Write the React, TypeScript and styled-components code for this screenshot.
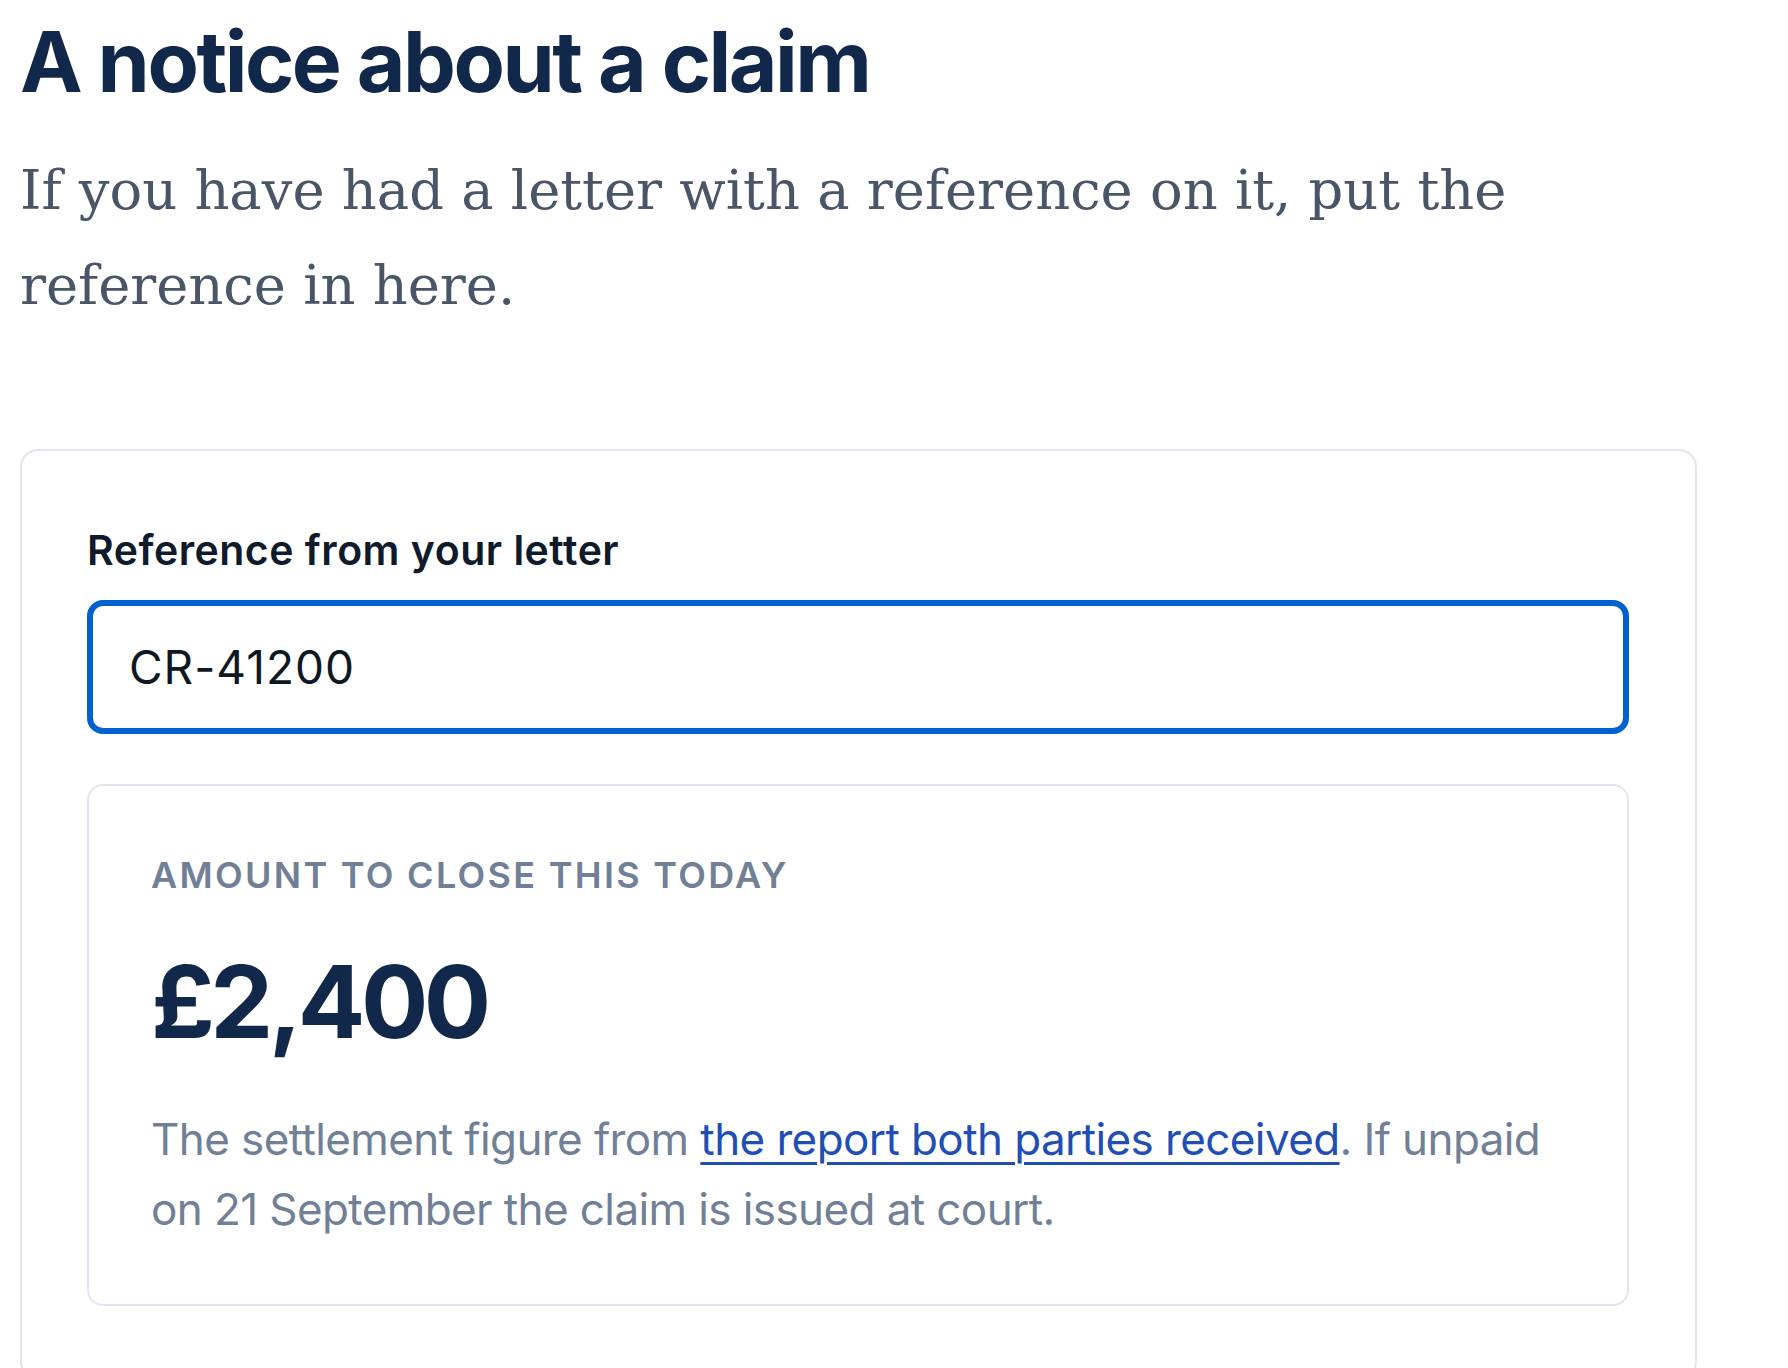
import React from "react";
import styled, { createGlobalStyle } from "styled-components";

const GlobalStyle = createGlobalStyle`
  html, body {
    margin: 0;
    padding: 0;
    background: #ffffff;
  }
  body {
    font-family: Inter, "Noto Sans", sans-serif;
  }
  * { box-sizing: border-box; }
`;

const Page = styled.main`
  padding: 12px 20px 0 20px;
  width: 100%;
`;

const Title = styled.h1`
  margin: 0;
  font-family: Inter, "Noto Sans", sans-serif;
  font-weight: 700;
  font-size: 84px;
  line-height: 100.8px;
  letter-spacing: -2.5px;
  color: #12284a;
`;

const Lead = styled.p`
  margin: 30px 0 0 0;
  max-width: 1560px;
  font-family: "DejaVu Serif", "Liberation Serif", serif;
  font-size: 54.3px;
  line-height: 95px;
  color: #4a5568;
`;

const Card = styled.section`
  margin-top: 116px;
  width: 1677px;
  border: 2px solid #e2e6ee;
  border-radius: 18px;
  padding: 71px 66px 72px 65px;
  background: #ffffff;
`;

const FieldLabel = styled.label`
  display: block;
  font-family: Inter, "Noto Sans", sans-serif;
  font-weight: 600;
  font-size: 41px;
  line-height: 57.4px;
  letter-spacing: 0.5px;
  color: #0f1a2a;
`;

const TextInput = styled.input`
  display: block;
  margin-top: 21px;
  width: 100%;
  height: 134px;
  border: 6px solid #0061cf;
  border-radius: 16px;
  padding: 0 36px;
  outline: none;
  font-family: Inter, "Noto Sans", sans-serif;
  font-size: 46px;
  letter-spacing: 1px;
  color: #0f1722;
  background: #ffffff;
`;

const ResultBox = styled.div`
  margin-top: 50px;
  border: 2px solid #e2e6ee;
  border-radius: 16px;
  padding: 64px 62px 60px 62px;
`;

const Eyebrow = styled.div`
  font-family: Inter, "Noto Sans", sans-serif;
  font-weight: 600;
  font-size: 36px;
  line-height: 50.4px;
  letter-spacing: 2.3px;
  text-transform: uppercase;
  color: #718096;
`;

const Amount = styled.div`
  margin-top: 46px;
  font-family: Inter, "Noto Sans", sans-serif;
  font-weight: 700;
  font-size: 100px;
  line-height: 110px;
  letter-spacing: -4.5px;
  color: #12284a;
`;

const Note = styled.p`
  margin: 47px 0 0 0;
  font-family: Inter, "Noto Sans", sans-serif;
  font-size: 44px;
  line-height: 70px;
  letter-spacing: -0.6px;
  color: #718096;
`;

const NoteLink = styled.a`
  color: #1f4fb5;
  text-decoration: underline;
  text-decoration-thickness: 3px;
  text-underline-offset: 7px;
`;

export default function App() {
  return (
    <>
      <GlobalStyle />
      <Page>
        <Title>A notice about a claim</Title>
        <Lead>
          If you have had a letter with a reference on it, put the reference in here.
        </Lead>
        <Card>
          <FieldLabel htmlFor="ref">Reference from your letter</FieldLabel>
          <TextInput id="ref" type="text" defaultValue="CR-41200" />
          <ResultBox>
            <Eyebrow>Amount to close this today</Eyebrow>
            <Amount>£2,400</Amount>
            <Note>
              The settlement figure from{" "}
              <NoteLink href="#report">the report both parties received</NoteLink>. If unpaid
              on 21 September the claim is issued at court.
            </Note>
          </ResultBox>
        </Card>
      </Page>
    </>
  );
}
